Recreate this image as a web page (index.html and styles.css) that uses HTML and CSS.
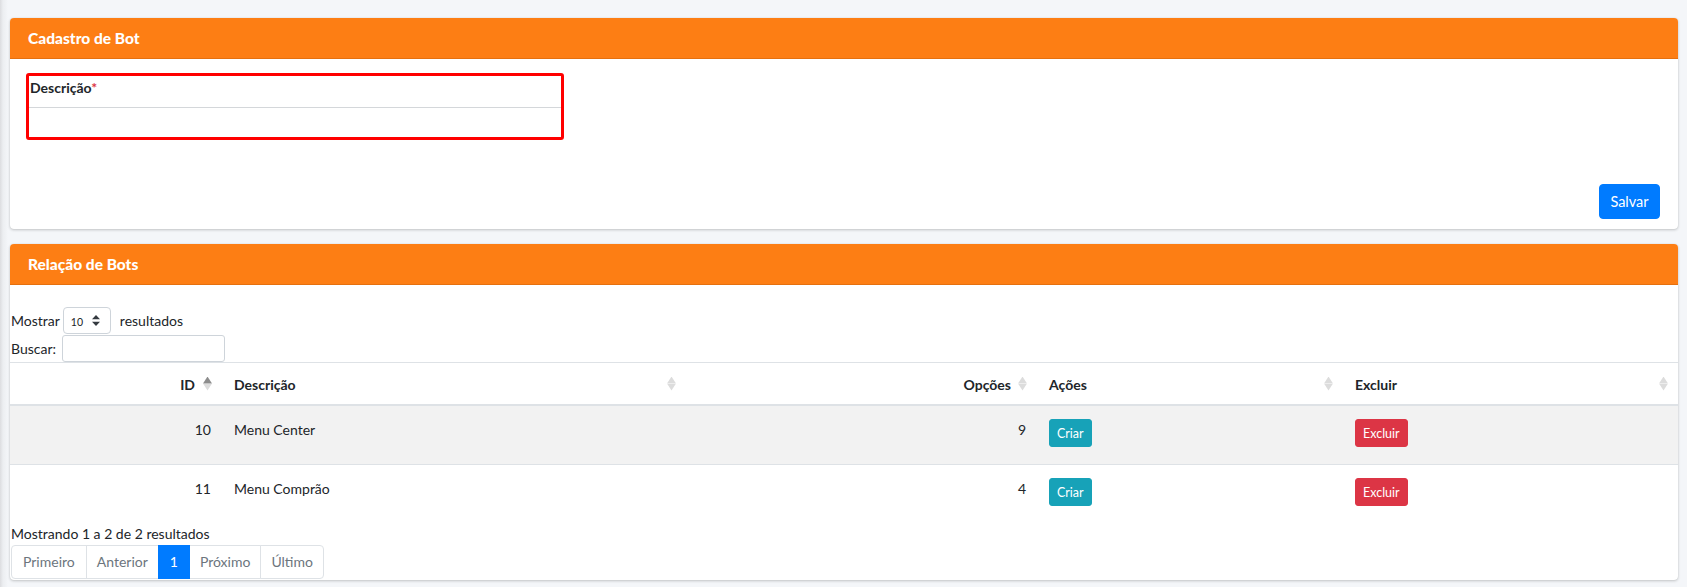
FILE: index.html
```html
<!DOCTYPE html>
<html lang="pt-BR">
<head>
<meta charset="utf-8">
<title>Cadastro de Bot</title>
<link rel="stylesheet" href="styles.css">
</head>
<body>
<main class="content">
  <section class="card">
    <div class="card-header"><h3 class="card-title">Cadastro de Bot</h3></div>
    <div class="card-body form-body">
      <div class="field-box">
        <label class="field-label" for="descricao">Descrição<span class="req">*</span></label>
        <input class="field-input" id="descricao" type="text">
      </div>
      <div class="form-actions">
        <button class="btn btn-primary btn-save" type="button">Salvar</button>
      </div>
    </div>
  </section>

  <section class="card">
    <div class="card-header"><h3 class="card-title">Relação de Bots</h3></div>
    <div class="card-body table-body">
      <div class="dt-length">
        <span>Mostrar</span>
        <span class="select-wrap">
          <select class="dt-select"><option>10</option><option>25</option><option>50</option><option>100</option></select>
          <svg class="select-arrows" width="8" height="11" viewBox="0 0 8 11"><path d="M4 0 L8 4.2 L0 4.2 Z M0 6.8 L8 6.8 L4 11 Z" fill="#343a40"/></svg>
        </span>
        <span>resultados</span>
      </div>
      <div class="dt-filter">
        <label class="filter-label" for="busca">Buscar:</label>
        <input class="dt-search" id="busca" type="search">
      </div>
      <table class="dt-table">
        <colgroup>
          <col class="c-id"><col class="c-desc"><col class="c-opc"><col class="c-acoes"><col class="c-excluir">
        </colgroup>
        <thead>
          <tr>
            <th class="num sorting asc">ID</th>
            <th class="sorting">Descrição</th>
            <th class="num sorting">Opções</th>
            <th class="sorting">Ações</th>
            <th class="sorting">Excluir</th>
          </tr>
        </thead>
        <tbody>
          <tr class="odd">
            <td class="num">10</td>
            <td>Menu Center</td>
            <td class="num">9</td>
            <td><button class="btn btn-sm btn-info" type="button">Criar</button></td>
            <td><button class="btn btn-sm btn-danger" type="button">Excluir</button></td>
          </tr>
          <tr>
            <td class="num">11</td>
            <td>Menu Comprão</td>
            <td class="num">4</td>
            <td><button class="btn btn-sm btn-info" type="button">Criar</button></td>
            <td><button class="btn btn-sm btn-danger" type="button">Excluir</button></td>
          </tr>
        </tbody>
      </table>
      <div class="dt-info">Mostrando 1 a 2 de 2 resultados</div>
      <ul class="pagination">
        <li class="page-item disabled"><span class="page-link">Primeiro</span></li>
        <li class="page-item disabled"><span class="page-link">Anterior</span></li>
        <li class="page-item active"><span class="page-link">1</span></li>
        <li class="page-item disabled"><span class="page-link">Próximo</span></li>
        <li class="page-item disabled"><span class="page-link">Último</span></li>
      </ul>
    </div>
  </section>
</main>
</body>
</html>
```
FILE: styles.css
```css
* { box-sizing: border-box; }

html, body { margin: 0; padding: 0; }

body {
  width: 1687px;
  height: 587px;
  overflow: hidden;
  background-color: #f4f6f9;
  background-image: linear-gradient(90deg, #dcdde0 0, #eceef1 3px, #f4f6f9 8px);
  background-repeat: no-repeat;
  background-size: 8px 100%;
  font-family: "Lato", "Liberation Sans", sans-serif;
  font-size: 14px;
  line-height: 22px;
  color: #212529;
}

.content {
  display: flex;
  flex-direction: column;
  gap: 15px;
  padding: 18px 9px 0 10px;
}

.card {
  background: #fff;
  border-radius: 4px;
  box-shadow: 0 0 1px rgba(0,0,0,.125), 0 1px 3px rgba(0,0,0,.2);
}

.card-header {
  height: 41px;
  display: flex;
  align-items: center;
  padding: 0 18px;
  background: #fd7e14;
  border-bottom: 1px solid #e5700f;
  border-radius: 4px 4px 0 0;
}

.card-title {
  margin: 0;
  font-size: 15.5px;
  font-weight: 900;
  color: #fff;
}

/* ---------- form card ---------- */
.form-body { padding: 14px 18px 10px 16px; }

.field-box {
  width: 538px;
  border: 3px solid #ff0000;
  border-radius: 3px;
}

.field-label {
  display: block;
  height: 31px;
  padding: 1px 0 0 1px;
  font-weight: 700;
}

.req { color: #dc3545; }

.field-input {
  display: block;
  width: 100%;
  height: 30px;
  margin: 0;
  border: 0;
  border-top: 1px solid #d4d7da;
  outline: none;
  background: #fff;
}

.form-actions {
  display: flex;
  justify-content: flex-end;
  margin-top: 44px;
}

.btn {
  font-family: inherit;
  border: 1px solid transparent;
  color: #fff;
  cursor: pointer;
}

.btn-primary { background: #007bff; border-color: #007bff; }

.btn-save {
  width: 61px;
  height: 35px;
  border-radius: 4px;
  font-size: 14.5px;
  padding: 0;
}

.btn-sm {
  height: 28px;
  padding: 0 7px;
  font-size: 12.5px;
  border-radius: 3px;
}

.btn-info { background: #17a2b8; border-color: #17a2b8; }
.btn-danger { background: #dc3545; border-color: #dc3545; }

/* ---------- table card ---------- */
.table-body { padding: 22px 0 1px; }

.dt-length {
  display: flex;
  align-items: center;
  height: 27px;
  padding-left: 1px;
}

.select-wrap {
  position: relative;
  margin: 0 9px 0 3px;
}

.dt-select {
  appearance: none;
  -webkit-appearance: none;
  display: block;
  width: 48px;
  height: 27px;
  padding: 2px 0 0 7px;
  border: 1px solid #ced4da;
  border-radius: 4px;
  background: #fff;
  font-family: inherit;
  font-size: 10.5px;
  color: #212529;
}

.select-arrows {
  position: absolute;
  right: 11px;
  top: 8px;
  pointer-events: none;
}

.dt-filter {
  display: flex;
  align-items: center;
  height: 27px;
  margin-top: 1px;
  padding-left: 1px;
}

.filter-label { margin-right: 6px; }

.dt-search {
  width: 163px;
  height: 27px;
  border: 1px solid #ced4da;
  border-radius: 3px;
  outline: none;
}

.dt-table {
  width: 100%;
  table-layout: fixed;
  border-collapse: separate;
  border-spacing: 0;
}

.c-id { width: 212px; }
.c-desc { width: 464px; }
.c-opc { width: 351px; }
.c-acoes { width: 306px; }
.c-excluir { width: 335px; }

.dt-table th {
  position: relative;
  text-align: left;
  font-weight: 700;
  padding: 11px 30px 8px 12px;
  border-top: 1px solid #dee2e6;
  border-bottom: 2px solid #dee2e6;
}

.dt-table th.num { text-align: right; padding-right: 27px; }
.dt-table th:nth-child(3).num { padding-right: 26px; }

.sorting::before,
.sorting::after {
  content: "";
  position: absolute;
  right: 10px;
  width: 9px;
  height: 7px;
  background: #dcdcdc;
}

.sorting::before {
  top: calc(50% - 7px);
  clip-path: polygon(50% 0, 100% 100%, 0 100%);
}

.sorting::after {
  top: calc(50% + 0px);
  clip-path: polygon(0 0, 100% 0, 50% 100%);
}

.sorting.asc::before { background: #8c8c8c; }

.dt-table td {
  vertical-align: top;
  padding: 13px 11px 17px 12px;
}

.dt-table td.num { text-align: right; padding-right: 11px; }

.dt-table tr.odd td { background: #f2f2f2; }

.dt-table tbody tr + tr td { border-top: 1px solid #dee2e6; }

.dt-info { padding-left: 1px; height: 22px; }

.pagination {
  display: flex;
  list-style: none;
  margin: 0;
  padding: 0 0 0 1px;
}

.page-link {
  display: block;
  height: 34px;
  line-height: 32px;
  padding: 0 10px;
  border: 1px solid #dee2e6;
  margin-left: -1px;
  color: #6c757d;
  background: #fff;
  font-size: 14px;
}

.page-item:first-child .page-link { margin-left: 0; padding: 0 11px; border-radius: 4px 0 0 4px; }
.page-item:last-child .page-link { border-radius: 0 4px 4px 0; }

.page-item.active .page-link {
  position: relative;
  background: #007bff;
  border-color: #007bff;
  color: #fff;
  padding: 0 11px;
}
```
